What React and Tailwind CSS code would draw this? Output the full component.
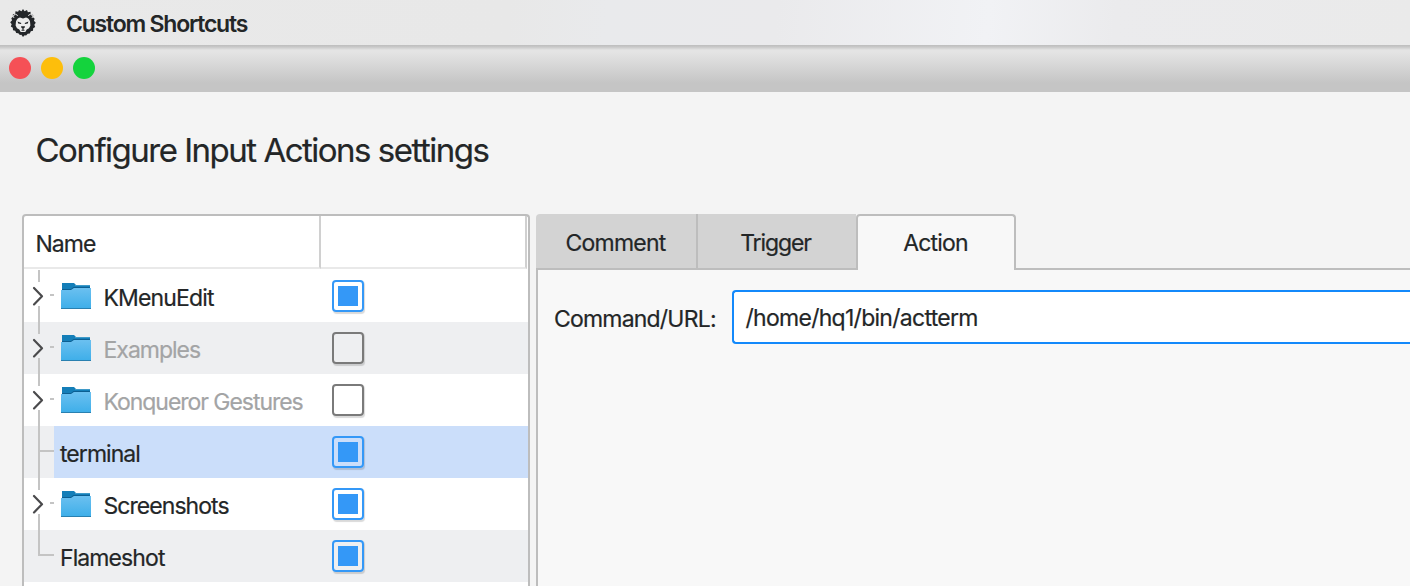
const rows = [
  { name: 'KMenuEdit', folder: true, checked: true, spacing: 'tracking-[-0.85px]' },
  { name: 'Examples', folder: true, muted: true, spacing: 'tracking-[-1px]' },
  { name: 'Konqueror Gestures', folder: true, muted: true, spacing: 'tracking-[-1.04px]' },
  { name: 'terminal', checked: true, selected: true, spacing: 'tracking-[-0.95px]' },
  { name: 'Screenshots', folder: true, checked: true, spacing: 'tracking-[-0.95px]' },
  { name: 'Flameshot', checked: true, last: true, spacing: 'tracking-[-0.9px]' },
];

function Lion() {
  return (
    <svg className="block h-7 w-[26px] shrink-0" viewBox="0 0 26 28">
      <path
        fill="#232629"
        d="M13 0l1.500 2.200L17 1l.9 2.300 2.600-.5.3 2.400 2.400.8-.2 2.300 1.700 1.500-.8 2 1.900 2-1.500 1.900.9 2.400-2 1.200-.2 2.500-2.200.5-1 2.200-2.100.2-1.600 1.700-1.500-.1L13 28l-1.600-2.200-1.500.1-1.600-1.700-2.100-.2-1-2.200L3 21.300l-.2-2.500-2-1.200.9-2.400L.2 13.300l1.900-2-.8-2L3 7.800l-.2-2.300 2.400-.8.3-2.400 2.600.5L9 1l2.500 1.200z"
      />
      <path
        fill="none"
        stroke="#ececec"
        strokeWidth="1"
        d="M7.800 6.600Q5.500 4.200 3.900 6Q2.900 7.400 3.900 8.900M18.200 6.600Q20.500 4.200 22.100 6Q23.100 7.400 22.100 8.900"
      />
      <path
        fill="#ececec"
        d="M10 8.400Q7 9 6 12.400L5.600 16.500 7 19.300 9.300 20.400 10.700 23h4.600l1.400-2.600L19 19.300l1.400-2.800-.4-4.100Q19 9 16 8.400L13 9.600z"
      />
      <path fill="#232629" d="M7.600 12.600l3.700 1.500-.3 1-2.800-.7zM18.400 12.600l-3.700 1.500.3 1 2.800-.7zM11 17.200h4l-.4 1.600-1.200 1v.8l1.500.4-.8.800h-2.200l-.8-.8 1.500-.4v-.8l-1.200-1z" />
    </svg>
  );
}

function Folder() {
  return (
    <svg className="block h-[26px] w-[30px]" viewBox="0 0 30 26">
      <defs>
        <linearGradient id="folderFront" x1="0" y1="0" x2="0" y2="1">
          <stop offset="0" stopColor="#6bc0f0" />
          <stop offset="1" stopColor="#3daee9" />
        </linearGradient>
      </defs>
      <path fill="#147eb8" d="M1 0h12l2 2h14v6H1z" />
      <path fill="#3f9ac8" d="M14 2h15v1H14z" />
      <path fill="#0c5f92" d="M1 6h9l2.500-2H29v1H13l-2.500 2H1z" />
      <path fill="url(#folderFront)" d="M0 7h10l3-2h17v21H0z" />
      <path fill="#2980b0" d="M0 25h30v1H0z" />
    </svg>
  );
}

function Branch({ row }) {
  return (
    <svg className="block h-[52px] w-[30px] shrink-0" viewBox="0 0 30 52">
      {row.folder ? (
        <>
          <path fill="#c4c4c4" d="M14 0h2v12h-2zM14 36h2v16h-2zM26 24h4v2h-4z" />
          <path d="M10 18l8 8.200-8 8.200" fill="none" stroke="#4a4a4c" strokeWidth="2.200" strokeLinecap="round" strokeLinejoin="round" />
        </>
      ) : (
        <path fill="#c4c4c4" d={row.last ? 'M14 0h2v24h14v2H14z' : 'M14 0h2v24h14v2H16v26h-2z'} />
      )}
    </svg>
  );
}

function CheckBox({ checked }) {
  return (
    <span
      className={`flex size-8 items-center justify-center rounded-[4px] border-2 ${
        checked ? 'border-[#3498f7]' : 'border-[#7a7a7a]'
      } shadow-[1px_1.500px_1px_rgba(0,0,0,0.15)]`}
    >
      {checked && <span className="size-5 bg-[#3498f7]" />}
    </span>
  );
}

function Row({ row, odd }) {
  return (
    <div className={`flex h-[52px] ${odd ? 'bg-[#eeeff1]' : 'bg-white'}`}>
      <Branch row={row} />
      <div className={`flex flex-1 ${row.selected ? 'bg-[#cbdefa]' : ''}`}>
        <div className="flex w-[278px] shrink-0 items-center pl-[6px]">
          {row.folder && (
            <span className="mr-[12.500px] ml-px pb-[1px]">
              <Folder />
            </span>
          )}
          <span className={`pt-[3px] whitespace-nowrap ${row.spacing} ${row.muted ? 'text-[#a3a4a5]' : ''}`}>{row.name}</span>
        </div>
        <div className="flex items-center">
          <CheckBox checked={row.checked} />
        </div>
      </div>
    </div>
  );
}

export default function App() {
  return (
    <div className="flex h-[586px] w-[1410px] flex-col overflow-hidden bg-[#f4f4f4] font-['Inter',sans-serif] text-[23px] leading-7 text-[#232627] [-webkit-text-stroke:0.2px]">
      <header className="flex h-[45px] shrink-0 items-center bg-[linear-gradient(95deg,#e9e9e9_0%,#e8e8e8_36%,#e9eaec_43%,#eaeaec_55%,#f1f2f5_70%,#ebebed_79%,#eaeaea_100%)] pl-[10px]">
        <Lion />
        <span className="ml-[30px] pt-[2px] font-semibold tracking-[-1.22px] [-webkit-text-stroke:0px]">Custom Shortcuts</span>
      </header>
      <div className="flex h-[47px] shrink-0 items-center gap-[10px] bg-[linear-gradient(to_bottom,#bdbdbd_0px,#c8c8c8_2px,#e4e4e4_5px,#e4e4e4_7px,#c5c5c5_38px,#c5c5c5_47px)] pb-[2px] pl-[9px]">
        <span className="size-[22px] rounded-full bg-[#f55056]" />
        <span className="size-[22px] rounded-full bg-[#fdbe0b]" />
        <span className="size-[22px] rounded-full bg-[#14d33d]" />
      </div>
      <h1 className="mt-[38px] ml-[35.500px] h-10 shrink-0 text-[33px] leading-10 tracking-[-1.500px]">Configure Input Actions settings</h1>
      <main className="mt-11 flex min-h-0 flex-1 pl-[22px]">
        <section className="flex w-[508px] shrink-0 flex-col rounded-t-[4px] border-2 border-b-0 border-[#bdbdbd] bg-white">
          <div className="mb-px flex h-[53px] shrink-0">
            <div className="flex w-[297px] items-center border-r-2 border-b-2 border-r-[#d0d0d0] border-b-[#e9e9e9] pt-[4px] pl-[11.500px] tracking-[-1px]">Name</div>
            <div className="w-[206px] border-r-2 border-b-2 border-r-[#d0d0d0] border-b-[#e9e9e9]" />
          </div>
          {rows.map((row, i) => (
            <Row key={row.name} row={row} odd={i % 2 === 1} />
          ))}
        </section>
        <section className="ml-[6px] flex min-w-0 flex-1 flex-col">
          <div className="flex h-14 shrink-0">
            <div className="flex w-[162px] items-center justify-center rounded-tl-[4px] border-r-2 border-b-2 border-[#bdbdbd] bg-[#d3d3d3] pt-[4px] pr-px tracking-[-0.8px]">Comment</div>
            <div className="flex w-[158px] items-center justify-center border-b-2 border-[#bdbdbd] bg-[#d3d3d3] pt-[4px] pr-[3px] tracking-[-1.1px]">Trigger</div>
            <div className="flex w-[160px] items-center justify-center rounded-t-[4px] border-2 border-b-0 border-[#bdbdbd] bg-[#f8f8f8] pr-px tracking-[-0.85px]">Action</div>
            <div className="flex-1 border-b-2 border-[#bdbdbd]" />
          </div>
          <div className="flex flex-1 items-start border-l-2 border-[#bdbdbd] bg-[#f8f8f8] pt-5 pl-4">
            <span className="w-[178px] shrink-0 pt-[15px] tracking-[-0.8px]">Command/URL:</span>
            <div className="flex h-[54px] flex-1 items-center rounded-l-[4px] border-2 border-r-0 border-[#1389fb] bg-white pt-[2px] pl-[11.500px] tracking-[-0.72px]">/home/hq1/bin/actterm</div>
          </div>
        </section>
      </main>
    </div>
  );
}
